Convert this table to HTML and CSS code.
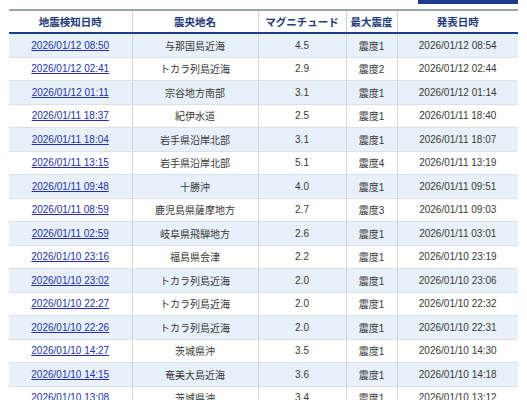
FILE: index.html
```html
<!DOCTYPE html>
<html lang="ja">
<head>
<meta charset="utf-8">
<title>地震情報</title>
<link rel="stylesheet" href="styles.css">
</head>
<body>
<div class="page">
  <div class="toolbar"><button class="btn" aria-label="ダウンロード"></button></div>
  <table class="quakes">
    <colgroup>
      <col class="c1"><col class="c2"><col class="c3"><col class="c4"><col class="c5">
    </colgroup>
    <thead>
      <tr><th>地震検知日時</th><th>震央地名</th><th>マグニチュード</th><th>最大震度</th><th>発表日時</th></tr>
    </thead>
    <tbody>
      <tr><td><a href="#">2026/01/12 08:50</a></td><td>与那国島近海</td><td>4.5</td><td>震度1</td><td>2026/01/12 08:54</td></tr>
      <tr><td><a href="#">2026/01/12 02:41</a></td><td>トカラ列島近海</td><td>2.9</td><td>震度2</td><td>2026/01/12 02:44</td></tr>
      <tr><td><a href="#">2026/01/12 01:11</a></td><td>宗谷地方南部</td><td>3.1</td><td>震度1</td><td>2026/01/12 01:14</td></tr>
      <tr><td><a href="#">2026/01/11 18:37</a></td><td>紀伊水道</td><td>2.5</td><td>震度1</td><td>2026/01/11 18:40</td></tr>
      <tr><td><a href="#">2026/01/11 18:04</a></td><td>岩手県沿岸北部</td><td>3.1</td><td>震度1</td><td>2026/01/11 18:07</td></tr>
      <tr><td><a href="#">2026/01/11 13:15</a></td><td>岩手県沿岸北部</td><td>5.1</td><td>震度4</td><td>2026/01/11 13:19</td></tr>
      <tr><td><a href="#">2026/01/11 09:48</a></td><td>十勝沖</td><td>4.0</td><td>震度1</td><td>2026/01/11 09:51</td></tr>
      <tr><td><a href="#">2026/01/11 08:59</a></td><td>鹿児島県薩摩地方</td><td>2.7</td><td>震度3</td><td>2026/01/11 09:03</td></tr>
      <tr><td><a href="#">2026/01/11 02:59</a></td><td>岐阜県飛騨地方</td><td>2.6</td><td>震度1</td><td>2026/01/11 03:01</td></tr>
      <tr><td><a href="#">2026/01/10 23:16</a></td><td>福島県会津</td><td>2.2</td><td>震度1</td><td>2026/01/10 23:19</td></tr>
      <tr><td><a href="#">2026/01/10 23:02</a></td><td>トカラ列島近海</td><td>2.0</td><td>震度1</td><td>2026/01/10 23:06</td></tr>
      <tr><td><a href="#">2026/01/10 22:27</a></td><td>トカラ列島近海</td><td>2.0</td><td>震度1</td><td>2026/01/10 22:32</td></tr>
      <tr><td><a href="#">2026/01/10 22:26</a></td><td>トカラ列島近海</td><td>2.0</td><td>震度1</td><td>2026/01/10 22:31</td></tr>
      <tr><td><a href="#">2026/01/10 14:27</a></td><td>茨城県沖</td><td>3.5</td><td>震度1</td><td>2026/01/10 14:30</td></tr>
      <tr><td><a href="#">2026/01/10 14:15</a></td><td>奄美大島近海</td><td>3.6</td><td>震度1</td><td>2026/01/10 14:18</td></tr>
      <tr><td><a href="#">2026/01/10 13:08</a></td><td>茨城県沖</td><td>3.4</td><td>震度1</td><td>2026/01/10 13:12</td></tr>
    </tbody>
  </table>
</div>
</body>
</html>
```
FILE: styles.css
```css
html, body {
  margin: 0;
  padding: 0;
  background: #ffffff;
}
body {
  font-family: "Liberation Sans", "Noto Sans CJK JP", sans-serif;
  color: #383838;
}
.page {
  padding: 0 9px;
}
.toolbar {
  display: flex;
  justify-content: flex-end;
  margin-top: -22px;
  margin-bottom: 5px;
}
.btn {
  width: 100px;
  height: 26px;
  border: 0;
  padding: 0;
  background: #1d3c8c;
}
.quakes {
  width: 509px;
  border-collapse: collapse;
  table-layout: fixed;
  font-size: 10px;
}
.c1 { width: 123px; }
.c2 { width: 126px; }
.c3 { width: 88px; }
.c4 { width: 51px; }
.c5 { width: 121px; }
.quakes th {
  height: 21px;
  padding: 0;
  font-size: 10.5px;
  font-weight: bold;
  color: #1e3a78;
  background: #ffffff;
  border-top: 2px solid #9aa3b2;
  border-bottom: 2px solid #1f3c88;
  border-left: 1px solid #cfd4dc;
  text-align: center;
}
.quakes th:first-child { border-left: 0; }
.quakes td {
  height: 22.5px;
  padding: 0;
  text-align: center;
  border-bottom: 1px solid #dde1e6;
  border-left: 1px solid #cfd4dc;
}
.quakes td:first-child { border-left: 0; }
.quakes tbody tr:nth-child(odd) td {
  background: #e8f0fa;
}
.quakes a {
  color: #2330a8;
  text-decoration: underline;
}
```
